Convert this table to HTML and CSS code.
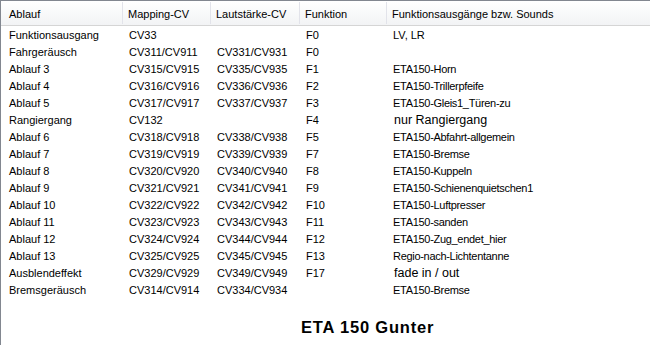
FILE: index.html
```html
<!DOCTYPE html>
<html lang="de">
<head>
<meta charset="utf-8">
<title>ETA 150 Gunter</title>
<link rel="stylesheet" href="styles.css">
</head>
<body>
<div class="list">
  <div class="row head">
    <div class="c c1">Ablauf</div>
    <div class="c c2">Mapping-CV</div>
    <div class="c c3">Lautstärke-CV</div>
    <div class="c c4">Funktion</div>
    <div class="c c5">Funktionsausgänge bzw. Sounds</div>
  </div>
  <div class="body">
    <div class="row"><div class="c c1">Funktionsausgang</div><div class="c c2">CV33</div><div class="c c3"></div><div class="c c4">F0</div><div class="c c5">LV, LR</div></div>
    <div class="row"><div class="c c1">Fahrgeräusch</div><div class="c c2">CV311/CV911</div><div class="c c3">CV331/CV931</div><div class="c c4">F0</div><div class="c c5"></div></div>
    <div class="row"><div class="c c1">Ablauf 3</div><div class="c c2">CV315/CV915</div><div class="c c3">CV335/CV935</div><div class="c c4">F1</div><div class="c c5 snd">ETA150-Horn</div></div>
    <div class="row"><div class="c c1">Ablauf 4</div><div class="c c2">CV316/CV916</div><div class="c c3">CV336/CV936</div><div class="c c4">F2</div><div class="c c5 snd">ETA150-Trillerpfeife</div></div>
    <div class="row"><div class="c c1">Ablauf 5</div><div class="c c2">CV317/CV917</div><div class="c c3">CV337/CV937</div><div class="c c4">F3</div><div class="c c5 snd">ETA150-Gleis1_Türen-zu</div></div>
    <div class="row"><div class="c c1">Rangiergang</div><div class="c c2">CV132</div><div class="c c3"></div><div class="c c4">F4</div><div class="c c5 big">nur Rangiergang</div></div>
    <div class="row"><div class="c c1">Ablauf 6</div><div class="c c2">CV318/CV918</div><div class="c c3">CV338/CV938</div><div class="c c4">F5</div><div class="c c5 snd">ETA150-Abfahrt-allgemein</div></div>
    <div class="row"><div class="c c1">Ablauf 7</div><div class="c c2">CV319/CV919</div><div class="c c3">CV339/CV939</div><div class="c c4">F7</div><div class="c c5 snd">ETA150-Bremse</div></div>
    <div class="row"><div class="c c1">Ablauf 8</div><div class="c c2">CV320/CV920</div><div class="c c3">CV340/CV940</div><div class="c c4">F8</div><div class="c c5 snd">ETA150-Kuppeln</div></div>
    <div class="row"><div class="c c1">Ablauf 9</div><div class="c c2">CV321/CV921</div><div class="c c3">CV341/CV941</div><div class="c c4">F9</div><div class="c c5 snd">ETA150-Schienenquietschen1</div></div>
    <div class="row"><div class="c c1">Ablauf 10</div><div class="c c2">CV322/CV922</div><div class="c c3">CV342/CV942</div><div class="c c4">F10</div><div class="c c5 snd">ETA150-Luftpresser</div></div>
    <div class="row"><div class="c c1">Ablauf 11</div><div class="c c2">CV323/CV923</div><div class="c c3">CV343/CV943</div><div class="c c4">F11</div><div class="c c5 snd">ETA150-sanden</div></div>
    <div class="row"><div class="c c1">Ablauf 12</div><div class="c c2">CV324/CV924</div><div class="c c3">CV344/CV944</div><div class="c c4">F12</div><div class="c c5 snd">ETA150-Zug_endet_hier</div></div>
    <div class="row"><div class="c c1">Ablauf 13</div><div class="c c2">CV325/CV925</div><div class="c c3">CV345/CV945</div><div class="c c4">F13</div><div class="c c5 snd">Regio-nach-Lichtentanne</div></div>
    <div class="row"><div class="c c1">Ausblendeffekt</div><div class="c c2">CV329/CV929</div><div class="c c3">CV349/CV949</div><div class="c c4">F17</div><div class="c c5 big">fade in / out</div></div>
    <div class="row"><div class="c c1">Bremsgeräusch</div><div class="c c2">CV314/CV914</div><div class="c c3">CV334/CV934</div><div class="c c4"></div><div class="c c5 snd">ETA150-Bremse</div></div>
  </div>
  <div class="title">ETA 150 Gunter</div>
</div>
</body>
</html>
```

FILE: styles.css
```css
html, body {
  margin: 0;
  padding: 0;
  background: #ffffff;
}

.list {
  width: 649px;
  height: 344px;
  border-left: 1px solid #828790;
  border-top: 1px solid #828790;
  font-family: "Liberation Sans", Arial, sans-serif;
  font-size: 11px;
  color: #000;
  overflow: hidden;
}

.row {
  display: grid;
  grid-template-columns: 122px 88px 89px 87px 1fr;
  height: 17px;
  line-height: 17px;
  white-space: nowrap;
}

.c {
  padding-left: 6px;
  overflow: hidden;
}

.c1 {
  padding-left: 8px;
}

.head {
  height: 24px;
  line-height: 24px;
  background: linear-gradient(#ffffff, #f2f3f5);
  border-bottom: 1px solid #d5d5d5;
}

.head .c {
  padding-top: 2px;
  line-height: 22px;
}

.head .c1,
.head .c2,
.head .c3,
.head .c4 {
  border-right: 1px solid #e2e3ea;
  margin: 1px 0 1px 0;
  line-height: 20px;
}

.head .c2,
.head .c3,
.head .c4,
.head .c5 {
  padding-left: 5px;
}

.body {
  padding-top: 1px;
}

.snd {
  letter-spacing: -0.3px;
}

.big {
  font-size: 12.5px;
  padding-left: 7px;
}

.title {
  margin-top: 19px;
  padding-left: 300px;
  font-size: 16.5px;
  font-weight: bold;
  letter-spacing: 0.8px;
  line-height: 18px;
}
```
